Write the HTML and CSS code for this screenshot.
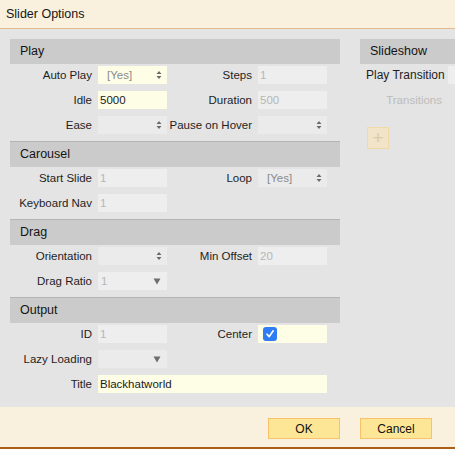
FILE: index.html
```html
<!DOCTYPE html>
<html>
<head>
<meta charset="utf-8">
<link rel="stylesheet" href="styles.css">
</head>
<body>
<div class="dialog">
  <div class="titlebar">Slider Options</div>
  <div class="main">
    <div class="left">
      <div class="section first">
        <div class="shead">Play</div>
        <div class="grid">
          <label>Auto Play</label>
          <div class="field yellow sel"><span class="val">[Yes]</span><svg class="updown" width="6" height="10" viewBox="0 0 6 10"><path d="M3 1 L5.5 4 L0.5 4 Z M3 9 L5.5 6 L0.5 6 Z" fill="#6a6a6a"/></svg></div>
          <label>Steps</label>
          <div class="field dis">1</div>
          <label>Idle</label>
          <div class="field yellow txt">5000</div>
          <label>Duration</label>
          <div class="field dis">500</div>
          <label>Ease</label>
          <div class="field plain sel"><span class="val"></span><svg class="updown" width="6" height="10" viewBox="0 0 6 10"><path d="M3 1 L5.5 4 L0.5 4 Z M3 9 L5.5 6 L0.5 6 Z" fill="#6a6a6a"/></svg></div>
          <label>Pause on Hover</label>
          <div class="field plain sel"><span class="val"></span><svg class="updown" width="6" height="10" viewBox="0 0 6 10"><path d="M3 1 L5.5 4 L0.5 4 Z M3 9 L5.5 6 L0.5 6 Z" fill="#6a6a6a"/></svg></div>
        </div>
      </div>
      <div class="section">
        <div class="shead">Carousel</div>
        <div class="grid">
          <label>Start Slide</label>
          <div class="field dis">1</div>
          <label>Loop</label>
          <div class="field plain sel"><span class="val">[Yes]</span><svg class="updown" width="6" height="10" viewBox="0 0 6 10"><path d="M3 1 L5.5 4 L0.5 4 Z M3 9 L5.5 6 L0.5 6 Z" fill="#6a6a6a"/></svg></div>
          <label>Keyboard Nav</label>
          <div class="field dis">1</div>
        </div>
      </div>
      <div class="section">
        <div class="shead">Drag</div>
        <div class="grid">
          <label>Orientation</label>
          <div class="field plain sel"><span class="val"></span><svg class="updown" width="6" height="10" viewBox="0 0 6 10"><path d="M3 1 L5.5 4 L0.5 4 Z M3 9 L5.5 6 L0.5 6 Z" fill="#6a6a6a"/></svg></div>
          <label>Min Offset</label>
          <div class="field dis">20</div>
          <label>Drag Ratio</label>
          <div class="field dis sel"><span class="val dim">1</span><svg class="down" width="8" height="7" viewBox="0 0 8 7"><path d="M0.5 0.5 L7.5 0.5 L4 6.5 Z" fill="#6e6e6e"/></svg></div>
        </div>
      </div>
      <div class="section last">
        <div class="shead">Output</div>
        <div class="grid">
          <label>ID</label>
          <div class="field dis">1</div>
          <label>Center</label>
          <div class="field yellow chk"><span class="checkbox"><svg width="10" height="10" viewBox="0 0 10 10"><path d="M2 5.2 L4.2 7.6 L8.2 1.8" fill="none" stroke="#fff" stroke-width="1.6" stroke-linecap="round" stroke-linejoin="round"/></svg></span></div>
          <label>Lazy Loading</label>
          <div class="field plain sel"><span class="val"></span><svg class="down" width="8" height="7" viewBox="0 0 8 7"><path d="M0.5 0.5 L7.5 0.5 L4 6.5 Z" fill="#6e6e6e"/></svg></div>
          <span></span><span></span>
          <label>Title</label>
          <div class="field yellow txt wide">Blackhatworld</div>
        </div>
      </div>
    </div>
    <div class="right">
      <div class="shead">Slideshow</div>
      <div class="rrow">
        <span class="rlabel">Play Transition</span>
        <div class="field rfield"></div>
      </div>
      <div class="rrow2"><span class="tlabel">Transitions</span></div>
      <div class="plusbtn">+</div>
    </div>
  </div>
  <div class="footer">
    <button class="btn">OK</button>
    <button class="btn">Cancel</button>
  </div>
</div>
</body>
</html>
```
FILE: styles.css
```css
html, body {
  margin: 0;
  padding: 0;
}
body {
  width: 455px;
  height: 449px;
  overflow: hidden;
  font-family: "Liberation Sans", Arial, sans-serif;
  font-size: 11.5px;
  color: #1e1e1e;
  background: #e4e4e4;
}
.dialog {
  display: flex;
  flex-direction: column;
  height: 449px;
  width: 455px;
  overflow: hidden;
}
.titlebar {
  height: 28px;
  line-height: 29px;
  padding-left: 6px;
  font-size: 12.5px;
  background: #faf0de;
  border-bottom: 1px solid #e5bc8e;
  color: #161616;
}
.main {
  height: 378px;
  display: flex;
  padding: 10px 0 0 10px;
  box-sizing: border-box;
  background: #e4e4e4;
}
.left {
  width: 330px;
  flex: none;
}
.section {
  padding-bottom: 7px;
}
.section.last {
  padding-bottom: 0;
}
.shead {
  height: 25px;
  line-height: 25px;
  background: #cbcbcb;
  padding-left: 10px;
  font-size: 12.5px;
  color: #141414;
  border-top: 1px solid #b4b4b4;
}
.section.first .shead {
  border-top: none;
}
.grid {
  display: grid;
  grid-template-columns: 88px 69px 91px 69px;
  grid-auto-rows: 18px;
  row-gap: 7px;
  margin-top: 2px;
}
.grid label {
  text-align: right;
  padding-right: 6px;
  line-height: 18px;
  white-space: nowrap;
}
.field {
  height: 18px;
  box-sizing: border-box;
  line-height: 18px;
  padding-left: 2px;
  display: flex;
  align-items: center;
}
.field.wide {
  grid-column: 2 / 5;
}
.yellow {
  background: #fefee6;
}
.dis {
  background: #eeeeee;
  color: #b6b6b6;
}
.plain {
  background: #ebebeb;
}
.txt {
  color: #1a1a1a;
}
.sel .val {
  flex: 1;
  padding-left: 7px;
  color: #8a8a8a;
}
.sel .val.dim {
  padding-left: 1px;
  color: #b6b6b6;
}
.updown {
  margin-right: 5px;
}
.down {
  margin-right: 6px;
}
.chk {
  padding-left: 5px;
}
.checkbox {
  width: 14px;
  height: 14px;
  border-radius: 3px;
  background: #2f7df6;
  display: flex;
  align-items: center;
  justify-content: center;
}
.right {
  margin-left: 20px;
  width: 95px;
  flex: none;
  overflow: hidden;
}
.right .shead {
  border-top: none;
}
.rrow {
  display: flex;
  margin-top: 2px;
  height: 18px;
  align-items: center;
}
.rlabel {
  width: 82px;
  padding-left: 6px;
  flex: none;
  white-space: nowrap;
  font-size: 12px;
}
.rfield {
  width: 7px;
  flex: none;
  background: #eeeeee;
}
.rrow2 {
  width: 82px;
  text-align: right;
  margin-top: 7px;
  height: 18px;
  line-height: 18px;
  color: #bcbcbc;
}
.plusbtn {
  margin-top: 18px;
  margin-left: 7px;
  width: 22px;
  height: 22px;
  box-sizing: border-box;
  background: #f1e4c9;
  border: 1px solid #f2d8a6;
  color: #ddcba8;
  font-size: 19px;
  line-height: 19px;
  text-align: center;
}
.footer {
  flex: 1;
  background: #faf0de;
  border-bottom: 2px solid #ab5e16;
  display: flex;
  justify-content: flex-end;
  align-items: flex-start;
  padding: 11px 23px 0 0;
  gap: 20px;
}
.btn {
  width: 72px;
  height: 21px;
  background: #fde796;
  border: 1px solid #f7c26a;
  font-family: "Liberation Sans", Arial, sans-serif;
  font-size: 12px;
  color: #111;
  padding: 0;
  margin: 0;
}
```
